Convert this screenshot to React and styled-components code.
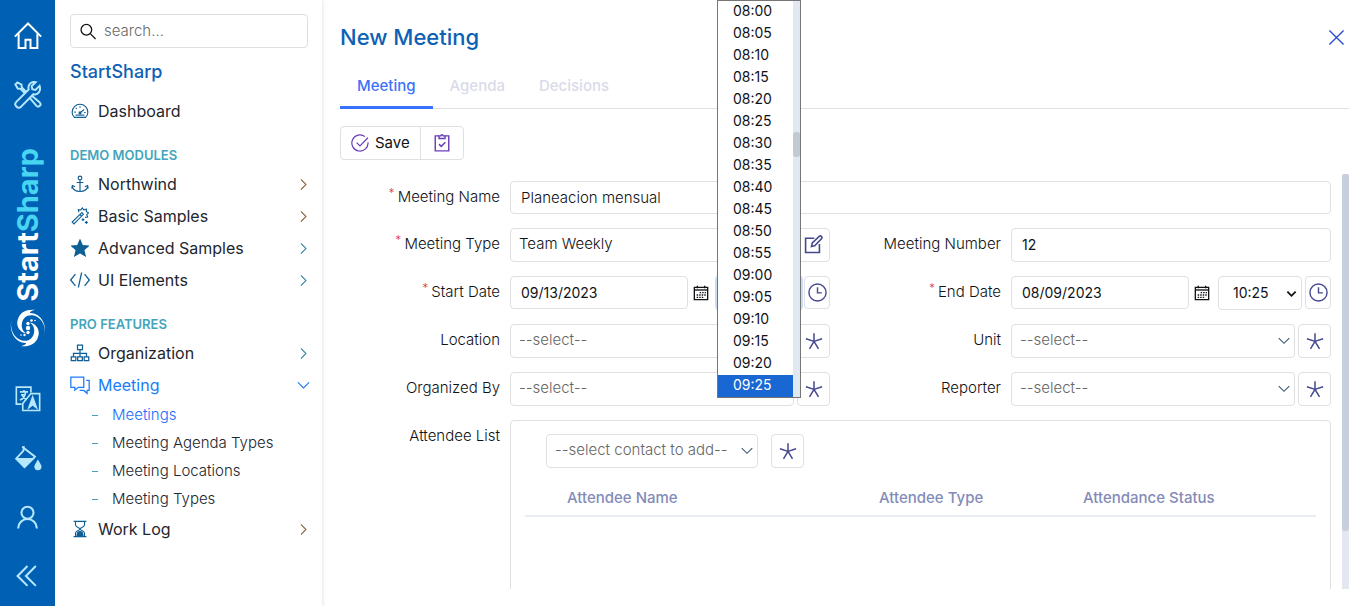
import React from "react";
import styled, { createGlobalStyle, css } from "styled-components";

const GlobalStyle = createGlobalStyle`
  *, *::before, *::after { box-sizing: border-box; }
  body {
    margin: 0;
    background: #fff;
    color: #101216;
    font-family: Inter, "Open Sans", sans-serif;
    font-size: 15px;
    line-height: 20px;
  }
  button, input, select { font: inherit; color: inherit; }
  a { color: inherit; text-decoration: none; }
  ul { list-style: none; margin: 0; padding: 0; }
`;

/* ---------- icons ---------- */

const Svg = styled.svg`
  display: block;
  flex: none;
  width: ${(p) => p.$size || 20}px;
  height: ${(p) => p.$size || 20}px;
  fill: none;
  stroke: currentColor;
  stroke-width: ${(p) => p.$weight || 1.5};
`;

const shapes = {
  home: (
    <>
      <path d="M1.5 12.5L12 2l10.500 10.500" />
      <path d="M4.500 10v11.500h5.500v-6.500h4v6.500h5.500V10" />
    </>
  ),
  tools: (
    <>
      <path d="M10.800 9.600L6.700 5.600 6.400 3.200 2.900 1.200 1.200 2.900l2 3.500 2.400.3 4 4.100" />
      <path d="M13.400 14.400l5.900 6.900c.8.8 2 .8 2.800 0s.8-2 0-2.800l-6.800-5.800" />
      <path d="M21.900 4.200l-3.500 3.500-2.700-.6-.6-2.700 3.500-3.400c-3.900-1-7.100 2.300-6 6.200L2 17.900c-2.600 2.600 1.400 6.700 4.100 4.100l10.500-10.700c3.900 1.100 6.800-2.800 5.300-7.100z" />
    </>
  ),
  translate: (
    <>
      <path d="M14.500 5.500V1H2v14.500h4.500" />
      <path d="M14.500 6.500h7.500V21H7.500v-6z" />
      <path d="M5 5h7M8.500 3.500V5M6 7.500h4M5 12c3-.8 4.500-3 5-7M7 8c1 2 2 2.800 4 3.500" />
      <path d="M12.800 18.500l3.200-9 3.200 9-3.200-2.500z" fill="currentColor" />
    </>
  ),
  bucket: (
    <>
      <path d="M8.500 1L8 5 1.800 11.700 9 19l9-9L7 1.500" />
      <path d="M3.500 12h12.500L9 18.500z" fill="currentColor" />
      <path d="M20.500 14c-1.500 2.400-2.300 3.500-2.300 4.500a2.300 2.300 0 004.600 0c0-1-.8-2.100-2.300-4.500z" fill="currentColor" />
    </>
  ),
  person: (
    <>
      <circle cx="12" cy="7.500" r="5.800" />
      <path d="M3 22.500a9 9 0 0118 0" />
    </>
  ),
  collapse: <path d="M12 2L2.500 11.500l9.500 9.500M20 2l-9.500 9.500 9.500 9.500" />,
  search: (
    <>
      <circle cx="9" cy="9.500" r="7.500" />
      <path d="M14.500 15l7.500 7.500" />
    </>
  ),
  gauge: (
    <>
      <path d="M4.500 20.500C2.500 18.600 1.500 16.300 1.500 13.500a10.500 10.500 0 0121 0c0 2.800-1 5.100-3 7z" />
      <path d="M12 14.500l5.500-4.500M4.500 13.500h2M17.500 14h2M12 5.500v2M6.500 8l1.200 1.200" />
      <circle cx="12" cy="14.500" r="1.300" fill="currentColor" />
      <path d="M6 17.500h12" />
    </>
  ),
  anchor: (
    <>
      <circle cx="12" cy="4" r="2.500" />
      <path d="M12 6.500V22M7.500 10h9M1.500 14.500c.7 4.600 4.600 7.500 10.500 7.500s9.800-2.900 10.500-7.500M1 18l.8-4 3.700 1.800M23 18l-.8-4-3.700 1.800" />
    </>
  ),
  wand: (
    <>
      <path d="M14.500 7.500L1.500 20l2.500 2.500L16.500 9.800zM12 10l2.200 2.200" />
      <path d="M10.500 7l-.7-3.500 3.400.5L15 1.200l2 2.700 3.400-1.100.1 3.500 3 1.500-2.500 2.400 1.200 3.300-3.500.3" />
      <path d="M16 15v3.500M14.300 16.800h3.500M20.500 18.500v4M18.500 20.500h4" />
    </>
  ),
  star: <path d="M12 1.200l3.200 7.400 8 .7-6.100 5.300 1.900 7.900-7-4.200-7 4.200 1.900-7.900L.8 9.300l8-.7z" fill="currentColor" />,
  code: <path d="M6.500 5L.8 12l5.700 7M17.500 5l5.700 7-5.700 7M14 3l-4 18" />,
  tree: (
    <>
      <path d="M9 2.500h6v5.500H9zM1.500 16.500h5.500V21H1.500zM9.200 16.500h5.600V21H9.200zM17 16.500h5.500V21H17z" />
      <path d="M12 8v8.500M4.200 16.500v-4h15.600v4" />
    </>
  ),
  chat: <path d="M1 2.500h15.500v12.200H10l-4.200 3.500v-3.500H1zM19.500 6.500H23v12h-2.500V22l-4-3.500h-5" />,
  hourglass: (
    <>
      <path d="M3.500 1.800h17M3.500 22.200h17M6 2v4.500c0 3 6 3.500 6 5.500s-6 2.500-6 5.500V22M18 2v4.500c0 3-6 3.500-6 5.500s6 2.500 6 5.500V22" />
      <path d="M8 21.500c0-5 1.500-6 4-6s4 1 4 6z" fill="currentColor" />
    </>
  ),
  right: <path d="M8 4l8 8-8 8" />,
  down: <path d="M3 7l9 9 9-9" />,
  close: <path d="M2 2l20 20M22 2L2 22" />,
  check: (
    <>
      <path d="M18.600 3.500A10.800 10.800 0 1 0 22.700 11" />
      <path d="M7.500 11.500l4.500 4.500L22.500 5" />
    </>
  ),
  clipboard: (
    <>
      <path d="M8 2.500H3V22.500h18V2.500h-5" />
      <path d="M8 6h8V2.500h-2.500c-.3-2-2.700-2-3 0H8z" />
      <path d="M8 13.500l3 3 5.500-5.500" />
    </>
  ),
  edit: (
    <>
      <path d="M13 4H2v18h17.500V11.500" />
      <path d="M9.500 14.500l1-4.500 9-8.500c2-1.200 4 1 2.800 3l-8.800 9z" />
    </>
  ),
  calendar: (
    <>
      <path d="M2 3.500h20V22H2zM6.500 1v4M17.500 1v4" />
      <path d="M2 7.500h20" />
      <path d="M10 11.500h9.500M5.500 15h14M5.500 18.500h10" strokeDasharray="2.200 1.600" />
    </>
  ),
  clock: (
    <>
      <circle cx="12" cy="12" r="10.800" />
      <path d="M12 5.500v7h5.500" />
    </>
  ),
  star5: <path d="M12 12.500V1.500M12 12.500L1.200 9M12 12.500l10.800-3.500M12 12.500L6 22.500M12 12.500l6 10" />,
  caret: <path d="M3 8l9 9 9-9" />,
};

function Icon({ name, size, weight }) {
  return (
    <Svg viewBox="0 0 24 24" $size={size} $weight={weight} aria-hidden="true">
      {shapes[name]}
    </Svg>
  );
}

const arm =
  "M34 29C37 20 33 9 24 6.500C17 5 13 9 12 14C11 19 13 22 16 24.500C9 23 5.500 16 8 10C10 3 17 0 25 .8C21 2 20 3 20 4C31 4 38 16 34 29Z";

function Swirl() {
  return (
    <svg width="40" height="40" viewBox="-1 -1 38 40" fill="#fff" aria-hidden="true">
      <path d={arm} />
      <path d={arm} transform="rotate(180 18 19)" />
      <circle cx="18" cy="19" r="2.200" />
      <circle cx="18" cy="14.500" r="1.700" />
      <circle cx="21.500" cy="11.500" r="1.300" />
      <circle cx="25" cy="11.500" r=".8" />
      <circle cx="18" cy="23.500" r="1.700" />
      <circle cx="14.500" cy="26" r="1.200" />
      <circle cx="11" cy="26" r=".8" />
    </svg>
  );
}

/* ---------- rail ---------- */

const Page = styled.div`
  display: flex;
  height: 100vh;
  min-height: 600px;
  overflow: hidden;
`;

const Rail = styled.nav`
  flex: none;
  width: 55px;
  padding-top: 6px;
  display: flex;
  flex-direction: column;
  align-items: center;
  background: #0060b3;
  color: #b5e8fc;
`;

const RailButton = styled.button`
  display: grid;
  place-items: center;
  width: 55px;
  height: 59px;
  padding: 0;
  border: 0;
  background: none;
  color: ${(p) => (p.$active ? "#fff" : "inherit")};
  cursor: pointer;
`;

const Brand = styled.a`
  flex: 1;
  display: flex;
  flex-direction: column;
  align-items: center;
  justify-content: center;
  gap: 6px;
  padding-top: 2px;
`;

const BrandText = styled.span`
  writing-mode: vertical-rl;
  transform: rotate(180deg);
  font-size: 29px;
  font-weight: 700;
  line-height: 32px;
  color: #fff;
  em { font-style: normal; color: #48d5f2; }
`;

/* ---------- sidebar ---------- */

const Sidebar = styled.aside`
  flex: none;
  width: 267px;
  padding: 14px 14px 0 15px;
  box-shadow: 0 0 4px rgba(60, 80, 90, 0.22);
`;

const SearchBox = styled.label`
  display: flex;
  align-items: center;
  gap: 7px;
  height: 34px;
  padding: 0 9px;
  border: 1px solid #dfdfe1;
  border-radius: 4px;
`;

const SearchInput = styled.input`
  flex: 1;
  min-width: 0;
  padding: 0;
  border: 0;
  outline: 0;
  background: none;
  font-weight: 300;
  &::placeholder { color: #6b6b6b; opacity: 1; }
`;

const SiteName = styled.h1`
  margin: 12px 0 11px;
  font-size: 18px;
  line-height: 24px;
  font-weight: 500;
  color: #0d61b4;
`;

const SectionTitle = styled.h2`
  margin: 15px 0 0;
  font-size: 13px;
  line-height: 26px;
  font-weight: 600;
  color: #43a5bc;
`;

const NavItem = styled.a`
  display: flex;
  align-items: center;
  height: 32px;
  font-size: 16px;
  color: ${(p) => (p.$active ? "#1a7cf9" : "#22262e")};
`;

const NavIcon = styled.span`
  display: grid;
  place-items: center;
  width: 20px;
  margin-right: 8px;
  color: ${(p) => (p.$active ? "#1a7cf9" : "#0e5f95")};
`;

const NavArrow = styled.span`
  margin-left: auto;
  margin-right: -3px;
  color: ${(p) => (p.$open ? "#1a7cf9" : p.$tint)};
`;

const SubItem = styled.a`
  display: flex;
  align-items: center;
  gap: 14px;
  height: 28px;
  padding-left: 22px;
  font-weight: 300;
  color: ${(p) => (p.$active ? "#1a6dfc" : "#22262e")};
  &::before {
    content: "";
    width: 6px;
    height: 1px;
    background: #4c9cc0;
  }
`;

/* ---------- dialog ---------- */

const Main = styled.main`
  position: relative;
  flex: 1;
  min-width: 0;
  display: flex;
  flex-direction: column;
  padding: 22px 17px 17px 18px;
`;

const TitleBar = styled.header`
  display: flex;
  align-items: center;
  justify-content: space-between;
  height: 30px;
  padding-right: 4px;
`;

const Title = styled.h2`
  margin: 0;
  font-size: 22px;
  line-height: 30px;
  font-weight: 500;
  color: #0d61b4;
`;

const CloseButton = styled.button`
  padding: 0;
  border: 0;
  background: none;
  color: #2b4bd0;
  cursor: pointer;
`;

const Tabs = styled.div`
  flex: none;
  display: flex;
  margin-top: 13px;
  height: 44px;
  border-bottom: 1px solid #dfe0e3;
`;

const Tab = styled.button`
  height: 44px;
  padding: 1px 17px 0;
  border: 0;
  border-bottom: 3px solid ${(p) => (p.$active ? "#3772ff" : "transparent")};
  background: none;
  font-weight: 500;
  color: ${(p) => (p.$active ? "#3c72fa" : "#d9dbe9")};
`;

const Toolbar = styled.div`
  flex: none;
  align-self: flex-start;
  display: flex;
  height: 34px;
  margin: 17px 0 14px;
  border: 1px solid #e0e0e3;
  border-radius: 4px;
`;

const ToolButton = styled.button`
  display: flex;
  align-items: center;
  gap: 6px;
  padding: 0 ${(p) => (p.$wide ? 10 : 12)}px;
  border: 0;
  background: none;
  svg { color: #6a3fb5; }
  & + & { border-left: 1px solid #e0e0e3; }
`;

const FormPane = styled.div`
  flex: 1;
  min-height: 0;
  display: flex;
  gap: 11px;
`;

const Form = styled.form`
  flex: 1;
  min-width: 0;
  overflow: hidden;
  padding-top: 7px;
  display: flex;
  flex-direction: column;
  gap: 14px;
`;

const ScrollTrack = styled.div`
  width: 7px;
  background: #e3e8f0;
`;

const ScrollThumb = styled.div`
  height: 86%;
  border-radius: 3px;
  background: #c7cfda;
`;

const Row = styled.div`
  flex: none;
  display: grid;
  grid-template-columns: ${(p) => (p.$single ? "1fr" : "1fr 1fr")};
  gap: 11px;
`;

const Field = styled.div`
  display: grid;
  grid-template-columns: 160px minmax(0, 1fr);
  gap: 10px;
`;

const Label = styled.label`
  padding-top: 6px;
  text-align: right;
  font-weight: 300;
  ${(p) =>
    p.$required &&
    css`
      &::before {
        content: "*";
        margin-right: 3px;
        vertical-align: 5px;
        font-size: 12px;
        line-height: 10px;
        color: #e2333f;
      }
    `}
`;

const Controls = styled.div`
  display: flex;
  gap: 3px;
`;

const box = css`
  border: 1px solid #e0e0e3;
  border-radius: 4px;
  background: #fff;
`;

const TextInput = styled.input`
  ${box}
  flex: 1;
  width: 100%;
  min-width: 0;
  height: ${(p) => p.$height || 33}px;
  padding: 0 10px 1px;
  font-size: ${(p) => (p.$numeric ? 14 : 15)}px;
  font-weight: ${(p) => (p.$numeric ? 400 : 300)};
`;

const SelectWrap = styled.span`
  display: flex;
  align-items: center;
  flex: ${(p) => (p.$width ? "none" : 1)};
  width: ${(p) => (p.$width ? `${p.$width}px` : "auto")};
  height: 34px;
  svg {
    margin-left: ${(p) => (p.$time ? -16 : -18)}px;
    pointer-events: none;
    color: ${(p) => (p.$time ? "#111" : "#3b5571")};
  }
`;

const SelectBox = styled.select`
  ${box}
  appearance: none;
  width: 100%;
  height: 34px;
  padding: 0 16px ${(p) => (p.$time ? 0 : 2)}px ${(p) => (p.$time ? 14 : 8)}px;
  font-size: ${(p) => (p.$time ? 14 : 15)}px;
  font-weight: ${(p) => (p.$time ? 400 : 300)};
  color: ${(p) => (p.$empty ? "#666" : "inherit")};
  ${(p) =>
    p.$focused &&
    css`
      border-color: #9fc3ee;
      box-shadow: 0 0 0 2px #c9dcf5;
    `}
`;

const IconButton = styled.button`
  ${box}
  flex: none;
  display: grid;
  place-items: center;
  width: ${(p) => p.$width || 33}px;
  height: ${(p) => p.$height || 34}px;
  padding: 0 0 1px;
  color: #46488f;
  cursor: pointer;
`;

const CalendarButton = styled.button`
  flex: none;
  width: 16px;
  height: 34px;
  margin: 0 5px 0 2px;
  padding: 0;
  border: 0;
  background: none;
`;

/* Lines up with the start time drop-down, which ends the left half of the form. */
const TimeMenu = styled.div`
  position: absolute;
  z-index: 2;
  top: 0;
  left: calc(50% - 127px);
  display: flex;
  width: 84px;
  border: 1px solid #767676;
  background: #fff;
`;

const TimeList = styled.ul`
  flex: 1;
`;

const TimeOption = styled.li`
  height: 22px;
  padding-left: 15px;
  line-height: 20px;
  font-size: 14px;
  color: ${(p) => (p.$selected ? "#fff" : "#101216")};
  background: ${(p) => (p.$selected ? "#1967d2" : "transparent")};
`;

const MenuTrack = styled.div`
  width: 7px;
  padding-top: 131px;
  background: #e2e8f0;
`;

const MenuThumb = styled.div`
  height: 25px;
  border-radius: 3px;
  background: #c1c9d3;
`;

const AttendeePanel = styled.div`
  ${box}
  height: 240px;
  padding: 13px 14px;
`;

const AttendeeTools = styled.div`
  display: flex;
  gap: 13px;
  padding-left: 21px;
`;

const AttendeeTable = styled.table`
  width: 100%;
  margin-top: 13px;
  border-collapse: collapse;
  table-layout: fixed;
`;

const HeadCell = styled.th`
  width: ${(p) => (p.$width ? `${p.$width}px` : "auto")};
  height: 35px;
  padding: 0 8px;
  border-bottom: 2px solid #e9edf2;
  text-align: left;
  font-weight: 500;
  color: #848bb8;
`;

/* ---------- parts ---------- */

function Item({ icon, label, open, active, arrow, tint = "#8c6a4a" }) {
  const wide = icon === "code" || icon === "chat" || icon === "tree";
  return (
    <NavItem href="#" $active={active}>
      <NavIcon $active={active}>
        <Icon name={icon} size={wide ? 20 : 18} weight={1.5} />
      </NavIcon>
      {label}
      {arrow && (
        <NavArrow $open={open} $tint={tint}>
          <Icon name={open ? "down" : "right"} size={15} weight={1.7} />
        </NavArrow>
      )}
    </NavItem>
  );
}

function Combo({ id, value, empty, width, action = "star5" }) {
  return (
    <>
      <SelectWrap $width={width}>
        <SelectBox id={id} $empty={empty} defaultValue={value}>
          <option>{value}</option>
        </SelectBox>
        <Icon name="down" size={14} weight={1.8} />
      </SelectWrap>
      <IconButton type="button" aria-label={action === "edit" ? "Edit" : "New"}>
        <Icon name={action} size={action === "edit" ? 19 : 18} weight={2} />
      </IconButton>
    </>
  );
}

const times = [
  "08:00", "08:05", "08:10", "08:15", "08:20", "08:25", "08:30", "08:35", "08:40",
  "08:45", "08:50", "08:55", "09:00", "09:05", "09:10", "09:15", "09:20", "09:25",
];

function TimeDropdown({ value }) {
  return (
    <TimeMenu>
      <TimeList role="listbox" aria-label="Start time">
        {times.map((t) => (
          <TimeOption key={t} role="option" aria-selected={t === value} $selected={t === value}>
            {t}
          </TimeOption>
        ))}
      </TimeList>
      <MenuTrack>
        <MenuThumb />
      </MenuTrack>
    </TimeMenu>
  );
}

function DateTime({ id, date, time, open }) {
  return (
    <Controls>
      <TextInput id={id} defaultValue={date} $numeric />
      <CalendarButton type="button" aria-label="Pick a date">
        <Icon name="calendar" size={16} weight={2} />
      </CalendarButton>
      <SelectWrap $width={84} $time>
        <SelectBox $time $focused={open} aria-label="Time" defaultValue={time}>
          <option>{time}</option>
        </SelectBox>
        <Icon name="caret" size={11} weight={4} />
      </SelectWrap>
      <IconButton type="button" $width={26} $height={33} aria-label="Now">
        <Icon name="clock" size={19} weight={1.8} />
      </IconButton>
    </Controls>
  );
}

export default function App() {
  return (
    <>
      <GlobalStyle />
      <Page>
        <Rail>
          <RailButton $active aria-label="Home"><Icon name="home" size={30} weight={1.6} /></RailButton>
          <RailButton aria-label="Tools"><Icon name="tools" size={28} weight={1.7} /></RailButton>
          <Brand href="#">
            <BrandText>Start<em>Sharp</em></BrandText>
            <Swirl />
          </Brand>
          <RailButton aria-label="Language"><Icon name="translate" size={28} weight={1.4} /></RailButton>
          <RailButton aria-label="Theme"><Icon name="bucket" size={28} weight={1.6} /></RailButton>
          <RailButton aria-label="Account"><Icon name="person" size={25} weight={2} /></RailButton>
          <RailButton aria-label="Collapse"><Icon name="collapse" size={25} weight={2} /></RailButton>
        </Rail>

        <Sidebar>
          <SearchBox>
            <Icon name="search" size={17} weight={1.8} />
            <SearchInput placeholder="search..." aria-label="Search" />
          </SearchBox>
          <SiteName>StartSharp</SiteName>
          <Item icon="gauge" label="Dashboard" />
          <SectionTitle>DEMO MODULES</SectionTitle>
          <Item icon="anchor" label="Northwind" arrow />
          <Item icon="wand" label="Basic Samples" arrow />
          <Item icon="star" label="Advanced Samples" arrow tint="#3d8aa0" />
          <Item icon="code" label="UI Elements" arrow tint="#3d8aa0" />
          <SectionTitle>PRO FEATURES</SectionTitle>
          <Item icon="tree" label="Organization" arrow tint="#3d8aa0" />
          <Item icon="chat" label="Meeting" arrow open active />
          <SubItem href="#" $active>Meetings</SubItem>
          <SubItem href="#">Meeting Agenda Types</SubItem>
          <SubItem href="#">Meeting Locations</SubItem>
          <SubItem href="#">Meeting Types</SubItem>
          <Item icon="hourglass" label="Work Log" arrow />
        </Sidebar>

        <Main>
          <TitleBar>
            <Title>New Meeting</Title>
            <CloseButton aria-label="Close"><Icon name="close" size={17} weight={1.9} /></CloseButton>
          </TitleBar>
          <Tabs role="tablist">
            <Tab role="tab" aria-selected="true" $active>Meeting</Tab>
            <Tab role="tab" aria-selected="false">Agenda</Tab>
            <Tab role="tab" aria-selected="false">Decisions</Tab>
          </Tabs>
          <Toolbar>
            <ToolButton $wide><Icon name="check" size={18} weight={1.6} />Save</ToolButton>
            <ToolButton aria-label="Apply changes"><Icon name="clipboard" size={18} weight={1.9} /></ToolButton>
          </Toolbar>
          <FormPane>
            <Form>
              <Row $single>
                <Field>
                  <Label htmlFor="name" $required>Meeting Name</Label>
                  <TextInput id="name" defaultValue="Planeacion mensual" />
                </Field>
              </Row>
              <Row>
                <Field>
                  <Label htmlFor="type" $required>Meeting Type</Label>
                  <Controls><Combo id="type" value="Team Weekly" action="edit" /></Controls>
                </Field>
                <Field>
                  <Label htmlFor="number">Meeting Number</Label>
                  <TextInput id="number" defaultValue="12" $height={34} $numeric />
                </Field>
              </Row>
              <Row>
                <Field>
                  <Label htmlFor="start" $required>Start Date</Label>
                  <DateTime id="start" date="09/13/2023" time="09:25" open />
                </Field>
                <Field>
                  <Label htmlFor="end" $required>End Date</Label>
                  <DateTime id="end" date="08/09/2023" time="10:25" />
                </Field>
              </Row>
              <Row>
                <Field>
                  <Label htmlFor="location">Location</Label>
                  <Controls><Combo id="location" value="--select--" empty /></Controls>
                </Field>
                <Field>
                  <Label htmlFor="unit">Unit</Label>
                  <Controls><Combo id="unit" value="--select--" empty /></Controls>
                </Field>
              </Row>
              <Row>
                <Field>
                  <Label htmlFor="organizer">Organized By</Label>
                  <Controls><Combo id="organizer" value="--select--" empty /></Controls>
                </Field>
                <Field>
                  <Label htmlFor="reporter">Reporter</Label>
                  <Controls><Combo id="reporter" value="--select--" empty /></Controls>
                </Field>
              </Row>
              <Row $single>
                <Field>
                  <Label htmlFor="attendee">Attendee List</Label>
                  <AttendeePanel>
                    <AttendeeTools>
                      <Combo id="attendee" value="--select contact to add--" empty width={212} />
                    </AttendeeTools>
                    <AttendeeTable>
                      <thead>
                        <tr>
                          <HeadCell $width={34} aria-label="Actions" />
                          <HeadCell $width={312}>Attendee Name</HeadCell>
                          <HeadCell $width={204}>Attendee Type</HeadCell>
                          <HeadCell>Attendance Status</HeadCell>
                        </tr>
                      </thead>
                    </AttendeeTable>
                  </AttendeePanel>
                </Field>
              </Row>
            </Form>
            <ScrollTrack><ScrollThumb /></ScrollTrack>
          </FormPane>
          <TimeDropdown value="09:25" />
        </Main>
      </Page>
    </>
  );
}
